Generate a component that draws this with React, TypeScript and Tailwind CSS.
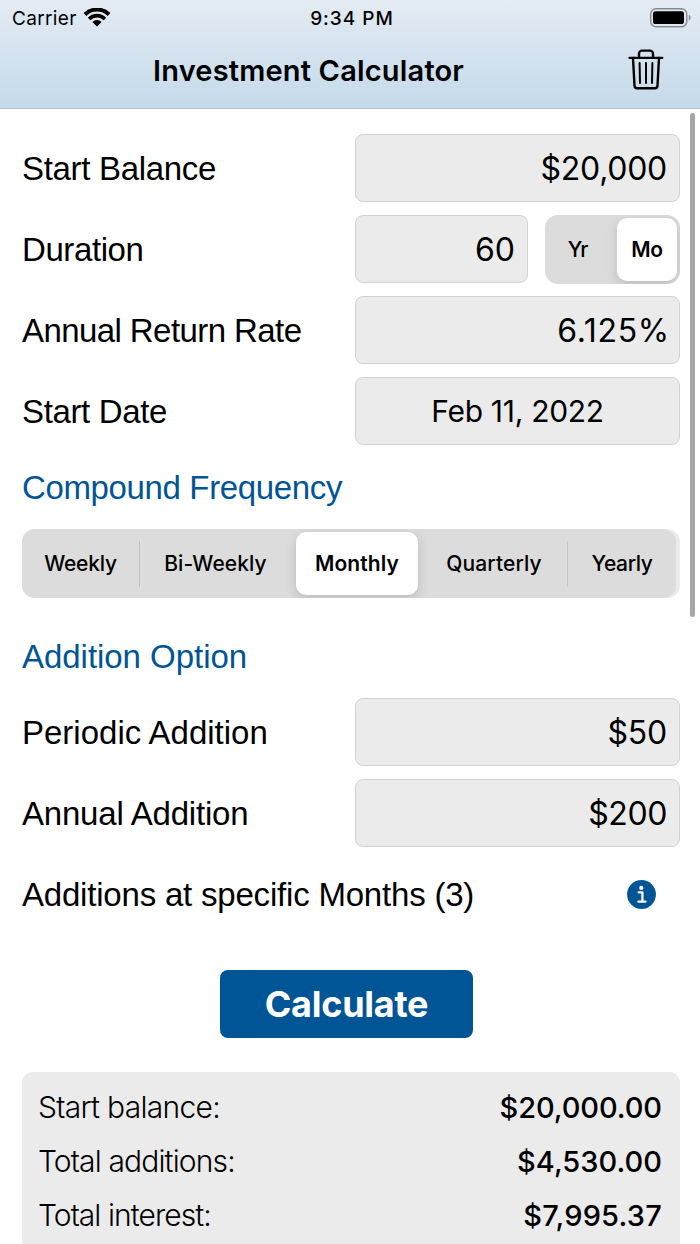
import React, { useState } from "react";
import clsx from "clsx";

interface Segment {
    label: string;
    width: string;
    tracking: string;
    divider?: boolean;
}

const durationUnits: Segment[] = [
    { label: "Yr", width: "w-[69px] pr-1", tracking: "tracking-[-1.2px]" },
    { label: "Mo", width: "w-[66px]", tracking: "tracking-[-0.4px]" },
];

const frequencies: Segment[] = [
    { label: "Weekly", width: "w-[118px]", tracking: "tracking-[-0.2px]", divider: true },
    { label: "Bi-Weekly", width: "w-[151px]", tracking: "tracking-[0.08px]" },
    { label: "Monthly", width: "w-[130px]", tracking: "tracking-[0.1px]" },
    { label: "Quarterly", width: "w-[147px]", tracking: "tracking-[0.1px]", divider: true },
    { label: "Yearly", width: "w-[108px]", tracking: "tracking-[-0.4px]" },
];

const results = [
    { label: "Start balance:", value: "$20,000.00", labelTracking: "tracking-[-0.7px]", valueTracking: "tracking-[-0.1px]" },
    { label: "Total additions:", value: "$4,530.00", labelTracking: "tracking-[-0.86px]", valueTracking: "tracking-[0.02px]" },
    { label: "Total interest:", value: "$7,995.37", labelTracking: "tracking-[-0.94px]", valueTracking: "tracking-[0.22px]" },
];

function WifiIcon() {
    return (
        <svg width="28" height="20" viewBox="0 0 28 20" fill="none" stroke="#000">
            <path d="M1.98 6.5A17 17 0 0 1 26.02 6.5" strokeWidth="4" />
            <path d="M6.08 10.9A11.2 11.2 0 0 1 21.92 10.9" strokeWidth="3.6" />
            <path d="M14 18.6L9.4 14A6.5 6.5 0 0 1 18.6 14Z" fill="#000" stroke="none" />
        </svg>
    );
}

function BatteryIcon() {
    return (
        <svg width="42" height="20" viewBox="0 0 42 20" fill="none">
            <rect x="0.75" y="0.75" width="36" height="18" rx="5.2" stroke="#858b91" strokeWidth="1.4" />
            <rect x="3" y="3.2" width="31" height="12.8" rx="2.6" fill="#000" />
            <path d="M38.8 6.8C41.2 7.6 41.2 11.8 38.8 12.6Z" fill="#858b91" />
        </svg>
    );
}

function TrashIcon() {
    return (
        <svg width="36" height="42" viewBox="0 0 36 42" fill="none" stroke="#000" strokeLinecap="round" strokeLinejoin="round">
            <path d="M1.5 8.8H34.3" strokeWidth="2.3" />
            <path d="M11 8.5V4.6A3 3 0 0 1 14 1.6H22A3 3 0 0 1 25 4.6V8.5" strokeWidth="2.4" />
            <path d="M5 9L6.5 36.8A2.6 2.6 0 0 0 9.1 39.3H26.9A2.6 2.6 0 0 0 29.5 36.8L31 9" strokeWidth="2.4" />
            <path d="M11.6 14L12 34M18 14V34M24.4 14L24 34" strokeWidth="2" />
        </svg>
    );
}

function InfoIcon() {
    return (
        <svg width="29" height="29" viewBox="0 0 29 29">
            <circle cx="14.5" cy="14.5" r="14.4" fill="#005596" />
            <circle cx="14.3" cy="7.9" r="2.1" fill="#fff" />
            <path d="M11.7 12.3H15.4V21.3M11.3 21.6H18.5" fill="none" stroke="#fff" strokeWidth="2.3" strokeLinecap="round" strokeLinejoin="round" />
        </svg>
    );
}

function Label({ className, children }: { className?: string; children: React.ReactNode }) {
    return (
        <span className={clsx("whitespace-nowrap font-['Liberation_Sans',sans-serif] text-[33px] leading-none", className)}>
            {children}
        </span>
    );
}

function Field({ className, children }: { className?: string; children: React.ReactNode }) {
    return (
        <div className={clsx("flex h-[68px] items-center rounded-lg border border-[#d2d2d2] bg-[#ebebeb] leading-none", className)}>
            {children}
        </div>
    );
}

interface SegmentedProps {
    segments: Segment[];
    value: string;
    onChange: (value: string) => void;
    pill: string;
}

function Segmented({ segments, value, onChange, pill }: SegmentedProps) {
    return (
        <div className="flex h-[69px] overflow-hidden rounded-[13px] bg-[#dcdcdc]">
            {segments.map((segment) => {
                const active = segment.label === value;
                return (
                    <button
                        key={segment.label}
                        onClick={() => onChange(segment.label)}
                        className={clsx("flex items-center py-[3px] text-[21px] leading-none", segment.width, segment.tracking, active && pill)}
                    >
                        <span
                            className={clsx(
                                "flex h-full flex-1 items-center justify-center whitespace-nowrap",
                                active ? "rounded-[10px] bg-white font-semibold shadow-[0_4px_12px_rgba(0,0,0,0.15)]" : "font-medium"
                            )}
                        >
                            {segment.label}
                        </span>
                        {segment.divider && <span className="h-[46px] w-px bg-[#c4c4c4]" />}
                    </button>
                );
            })}
        </div>
    );
}

export default function App() {
    const [unit, setUnit] = useState("Mo");
    const [frequency, setFrequency] = useState("Monthly");

    return (
        <div className="relative h-[1244px] w-[700px] overflow-hidden bg-white font-['Inter',sans-serif] text-black">
            <header className="h-[109px] border-b border-[#b9c2ca] bg-linear-to-b from-[#e4ebf3] to-[#c4daea]">
                {/* Status bar */}
                <div className="grid h-9 grid-cols-3 items-center pl-3 pr-2">
                    <div className="flex items-center gap-[6px]">
                        <span className="text-[19px] leading-none tracking-[0.35px]">Carrier</span>
                        <WifiIcon />
                    </div>
                    <span className="text-center text-[19px] font-medium leading-none tracking-[1px]">9:34 PM</span>
                    <div className="flex justify-end">
                        <BatteryIcon />
                    </div>
                </div>

                {/* Title bar */}
                <div className="flex h-[68px] items-center justify-between pl-[153px] pr-[36px]">
                    <h1 className="pt-px text-[29px] font-semibold leading-none tracking-[0.18px]">Investment Calculator</h1>
                    <button aria-label="Clear">
                        <TrashIcon />
                    </button>
                </div>
            </header>

            <main className="pl-[22px] pr-5">
                <section className="flex flex-col gap-[13px] pt-[25px]">
                    <div className="flex items-center justify-between">
                        <Label className="tracking-[-0.31px]">Start Balance</Label>
                        <Field className="w-[325px] justify-end pr-3 pt-0.5 text-[32px] tracking-[-0.28px]">$20,000</Field>
                    </div>
                    <div className="flex items-center justify-between">
                        <Label className="tracking-[-0.41px]">Duration</Label>
                        <div className="flex h-[68px] w-[325px] justify-between">
                            <Field className="w-[173px] justify-end pr-3 pt-0.5 text-[32px]">60</Field>
                            <Segmented segments={durationUnits} value={unit} onChange={setUnit} pill="pl-[3px] pr-[3px]" />
                        </div>
                    </div>
                    <div className="flex items-center justify-between">
                        <Label className="tracking-[-0.58px]">Annual Return Rate</Label>
                        <Field className="w-[325px] justify-end pr-[9px] pt-0.5 text-[32px] tracking-[0.7px]">6.125%</Field>
                    </div>
                    <div className="flex items-center justify-between">
                        <Label className="tracking-[-0.36px]">Start Date</Label>
                        <Field className="w-[325px] justify-center text-[30px] tracking-[-0.3px]">Feb 11, 2022</Field>
                    </div>
                </section>

                <h2 className="flex h-[84px] items-center text-[#005596]">
                    <Label className="tracking-[-0.36px]">Compound Frequency</Label>
                </h2>
                <div className="rounded-[13px] bg-[#ebebeb]">
                    <div className="w-[654px]">
                        <Segmented segments={frequencies} value={frequency} onChange={setFrequency} pill="pl-[5px] pr-[3px]" />
                    </div>
                </div>

                <h2 className="flex h-[100px] items-center pt-4 text-[#005596]">
                    <Label className="tracking-[-0.04px]">Addition Option</Label>
                </h2>
                <section className="flex flex-col gap-[13px]">
                    <div className="flex items-center justify-between">
                        <Label className="tracking-[0px]">Periodic Addition</Label>
                        <Field className="w-[325px] justify-end pr-3 pt-0.5 text-[32px] tracking-[-0.2px]">$50</Field>
                    </div>
                    <div className="flex items-center justify-between">
                        <Label className="tracking-[-0.2px]">Annual Addition</Label>
                        <Field className="w-[325px] justify-end pr-3 pt-0.5 text-[32px] tracking-[-0.4px]">$200</Field>
                    </div>
                    <div className="flex h-[68px] items-center justify-between pr-6">
                        <Label className="tracking-[-0.2px]">Additions at specific Months (3)</Label>
                        <InfoIcon />
                    </div>
                </section>

                <button className="ml-[198px] mt-[42px] flex h-[68px] w-[253px] items-center justify-center rounded-lg bg-[#005596] text-[36px] font-bold leading-none tracking-[-0.25px] text-white">
                    Calculate
                </button>

                <section className="mt-[34px] h-[220px] rounded-t-[11px] bg-[#ebebeb] pl-4 pr-[18px] pt-2">
                    {results.map((row) => (
                        <div key={row.label} className="flex h-[54px] items-center justify-between leading-none">
                            <span className={clsx("text-[30px] font-light", row.labelTracking)}>{row.label}</span>
                            <span className={clsx("text-[29px] font-medium", row.valueTracking)}>{row.value}</span>
                        </div>
                    ))}
                </section>
            </main>

            {/* Scroll indicator */}
            <div className="absolute right-[5px] top-[113px] h-[504px] w-[5px] rounded-full bg-[#a6a6a6]" />
        </div>
    );
}
